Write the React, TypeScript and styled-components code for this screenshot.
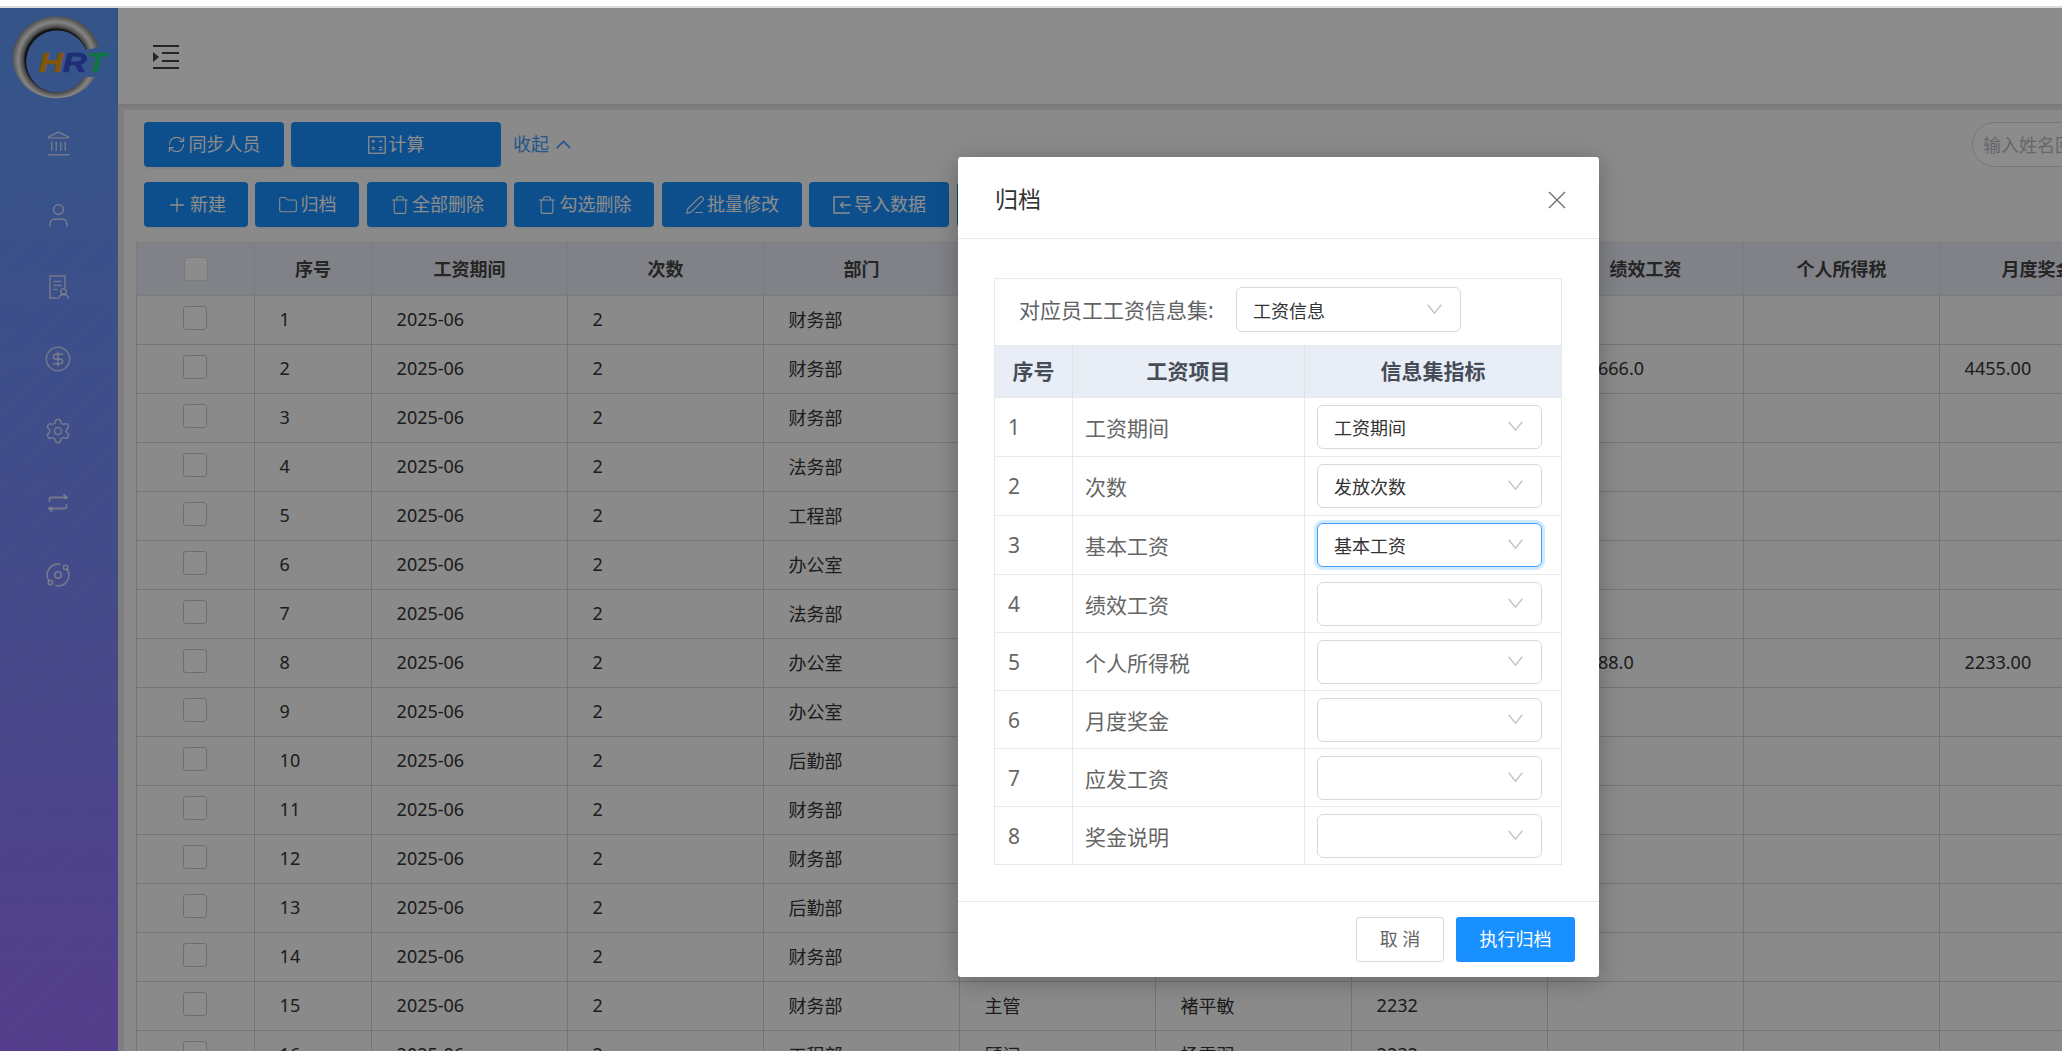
import React from 'react'
import styled, { createGlobalStyle } from 'styled-components';
import { ChevronUp, CircleDollarSign, Folder, Landmark, Orbit, PenLine, Plus, RefreshCw, Settings, Trash, User } from 'lucide-react';

const FONT = `"Noto Sans", "Noto Sans CJK SC", sans-serif`;

const GlobalStyle = createGlobalStyle`
    html, body {
        margin: 0;
        height: 100%;
        overflow: hidden;
        background: #fff;
    }
    body {
        font-family: ${FONT};
    }
    * {
        box-sizing: border-box;
    }
`;

interface Row {
    no: number,
    dept: string,
    post?: string,
    name?: string,
    base?: string,
    merit?: string,
    bonus?: string
}

const rows: Row[] = [
    { no: 1, dept: "财务部" },
    { no: 2, dept: "财务部", merit: "66,666.0", bonus: "4455.00" },
    { no: 3, dept: "财务部" },
    { no: 4, dept: "法务部" },
    { no: 5, dept: "工程部" },
    { no: 6, dept: "办公室" },
    { no: 7, dept: "法务部" },
    { no: 8, dept: "办公室", merit: "3,388.0", bonus: "2233.00" },
    { no: 9, dept: "办公室" },
    { no: 10, dept: "后勤部" },
    { no: 11, dept: "财务部" },
    { no: 12, dept: "财务部" },
    { no: 13, dept: "后勤部" },
    { no: 14, dept: "财务部" },
    { no: 15, dept: "财务部", post: "主管", name: "褚平敏", base: "2232" },
    { no: 16, dept: "工程部", post: "顾问", name: "杨雪羽", base: "2232" },
];

const columns = ["序号", "工资期间", "次数", "部门", "职务", "姓名", "基本工资", "绩效工资", "个人所得税", "月度奖金"];

const mapping = [
    { no: 1, item: "工资期间", value: "工资期间", tall: true },
    { no: 2, item: "次数", value: "发放次数", tall: true },
    { no: 3, item: "基本工资", value: "基本工资", tall: true, focused: true },
    { no: 4, item: "绩效工资", value: "" },
    { no: 5, item: "个人所得税", value: "" },
    { no: 6, item: "月度奖金", value: "" },
    { no: 7, item: "应发工资", value: "" },
    { no: 8, item: "奖金说明", value: "" },
];

function Logo() {
    return (
        <svg width="118" height="99" viewBox="0 0 118 99">
            <defs>
                <radialGradient id="ring" gradientUnits="userSpaceOnUse" cx="56" cy="52" r="44">
                    <stop offset="0.7" stopColor="#222" />
                    <stop offset="0.75" stopColor="#8a8a8a" />
                    <stop offset="0.86" stopColor="#f2f2f2" />
                    <stop offset="1" stopColor="#8f8f8f" />
                </radialGradient>
            </defs>
            <path d="M99 39 A44 41 0 1 0 95 69 L84 69 A31 31 0 1 1 86 42 Z" fill="url(#ring)" />
            <text transform="translate(39 64) scale(1.18 1)" fontFamily='"Liberation Sans", sans-serif' fontWeight="bold" fontStyle="italic" fontSize="28" strokeWidth="0.6">
                <tspan fill="#f0990f" stroke="#f0990f">H</tspan>
                <tspan fill="#3752d8" stroke="#3752d8">R</tspan>
                <tspan fill="#1cd27c" stroke="#1cd27c">T</tspan>
            </text>
        </svg>
    )
}

function DocIcon() {
    return (
        <svg width="24" height="26" viewBox="0 0 24 26" fill="none" stroke="currentColor" strokeWidth="1.5">
            <path d="M11 24H4V2h15v12" />
            <path d="M7.5 7.5h8M7.5 11.5h8M7.5 15.5h4" />
            <circle cx="17.5" cy="17.5" r="2.8" />
            <path d="M12.5 25c.5-3 2.5-4.500 5-4.500s4.500 1.500 5 4.500" />
        </svg>
    )
}

function SwapIcon() {
    return (
        <svg width="20" height="18" viewBox="0 0 20 18" fill="none" stroke="currentColor" strokeWidth="1.800">
            <path d="M1.500 8V5a1.500 1.500 0 0 1 1.500-1.500h16" />
            <path d="M15.500 .5 19 3.500l-3.500 1" />
            <path d="M18.500 10v3a1.500 1.500 0 0 1-1.500 1.500H1" />
            <path d="M4.500 17.500 1 14.500l3.500-1" />
        </svg>
    )
}

function FoldIcon() {
    return (
        <svg width="26" height="24" viewBox="0 0 26 24" fill="none">
            <path d="M0 1h26M9 8h17M9 16h17M0 23h26" stroke="#444" strokeWidth="2" />
            <path d="M0 7v10l6-5z" fill="#444" />
        </svg>
    )
}

function CalcIcon() {
    return (
        <svg width="18" height="18" viewBox="0 0 17 17" fill="none" stroke="currentColor" strokeWidth="1.200">
            <rect x=".7" y=".7" width="15.600" height="15.600" />
            <path d="M3.500 5h3M5 3.500v3M10.500 5h3M3.800 10.500l2.400 2.400M6.200 10.500l-2.400 2.400M10.500 10.800h3M10.500 12.800h3" />
        </svg>
    )
}

function ImportIcon() {
    return (
        <svg width="19" height="18" viewBox="0 0 18 17" fill="none" stroke="currentColor" strokeWidth="1.400">
            <path d="M16 1H1v15h15" />
            <path d="M17 8.500H7M10 5.500 7 8.500l3 3" />
        </svg>
    )
}

function Chevron() {
    return (
        <svg width="15" height="10" viewBox="0 0 15 10" fill="none" stroke="#c0c4cc" strokeWidth="1.400">
            <path d="M.7.7 7.500 9.200 14.300.7" />
        </svg>
    )
}

export default function App() {
    return (
        <>
            <GlobalStyle />
            <TopStrip />
            <Frame>
                <Sidebar>
                    <LogoBox><Logo /></LogoBox>
                    <MenuItem><Landmark size={27} strokeWidth={1.3} /></MenuItem>
                    <MenuItem><User size={29} strokeWidth={1.3} /></MenuItem>
                    <MenuItem><DocIcon /></MenuItem>
                    <MenuItem><CircleDollarSign size={28} strokeWidth={1.3} /></MenuItem>
                    <MenuItem><Settings size={28} strokeWidth={1.3} /></MenuItem>
                    <MenuItem><SwapIcon /></MenuItem>
                    <MenuItem><Orbit size={26} strokeWidth={1.5} /></MenuItem>
                </Sidebar>
                <Main>
                    <TopBar><FoldIcon /></TopBar>
                    <Content>
                        <Card>
                            <ToolRow $spread>
                                <ButtonGroup>
                                    <ActionButton $width={140}><RefreshCw size={19} strokeWidth={1.4} /><ButtonText>同步人员</ButtonText></ActionButton>
                                    <ActionButton $width={210}><CalcIcon /><ButtonText>计算</ButtonText></ActionButton>
                                    <CollapseLink><ButtonText>收起</ButtonText><ChevronUp size={25} strokeWidth={1.5} /></CollapseLink>
                                </ButtonGroup>
                                <SearchBox>输入姓名回车查询</SearchBox>
                            </ToolRow>
                            <ToolRow>
                                <ButtonGroup>
                                    <ActionButton $width={104}><Plus size={22} strokeWidth={1.5} /><ButtonText>新建</ButtonText></ActionButton>
                                    <ActionButton $width={104}><Folder size={20} strokeWidth={1.3} /><ButtonText>归档</ButtonText></ActionButton>
                                    <ActionButton $width={140}><Trash size={20} strokeWidth={1.3} /><ButtonText>全部删除</ButtonText></ActionButton>
                                    <ActionButton $width={140}><Trash size={20} strokeWidth={1.3} /><ButtonText>勾选删除</ButtonText></ActionButton>
                                    <ActionButton $width={140}><PenLine size={20} strokeWidth={1.3} /><ButtonText>批量修改</ButtonText></ActionButton>
                                    <ActionButton $width={140}><ImportIcon /><ButtonText>导入数据</ButtonText></ActionButton>
                                    <ActionButton $width={140}><ImportIcon /><ButtonText>导出数据</ButtonText></ActionButton>
                                </ButtonGroup>
                            </ToolRow>
                            <DataTable>
                                <colgroup>
                                    <col width={118} />
                                    <col width={117} />
                                    {columns.slice(1).map(c => <col key={c} width={196} />)}
                                </colgroup>
                                <thead>
                                    <tr>
                                        <HeadCell><CheckBox $head /></HeadCell>
                                        {columns.map(c => <HeadCell key={c}>{c}</HeadCell>)}
                                    </tr>
                                </thead>
                                <tbody>
                                    {rows.map(r => (
                                        <tr key={r.no}>
                                            <BodyCell $check><CheckBox /></BodyCell>
                                            <BodyCell>{r.no}</BodyCell>
                                            <BodyCell>2025-06</BodyCell>
                                            <BodyCell>2</BodyCell>
                                            <BodyCell>{r.dept}</BodyCell>
                                            <BodyCell>{r.post}</BodyCell>
                                            <BodyCell>{r.name}</BodyCell>
                                            <BodyCell>{r.base}</BodyCell>
                                            <BodyCell>{r.merit}</BodyCell>
                                            <BodyCell />
                                            <BodyCell>{r.bonus}</BodyCell>
                                        </tr>
                                    ))}
                                </tbody>
                            </DataTable>
                        </Card>
                    </Content>
                </Main>
                <Overlay>
                    <Modal>
                        <ModalHead>
                            <ModalTitle>归档</ModalTitle>
                            <CloseMark width="18" height="18" viewBox="0 0 18 18" stroke="#777" strokeWidth="1.500">
                                <path d="M1 1l16 16M17 1 1 17" />
                            </CloseMark>
                        </ModalHead>
                        <ModalBody>
                            <MapBox>
                                <SetRow>
                                    <SetLabel>对应员工工资信息集:</SetLabel>
                                    <SelectBox $wide><span>工资信息</span><Chevron /></SelectBox>
                                </SetRow>
                                <MapHead>
                                    <span>序号</span>
                                    <span>工资项目</span>
                                    <span>信息集指标</span>
                                </MapHead>
                                {mapping.map(m => (
                                    <MapRow key={m.no} $tall={m.tall}>
                                        <MapCell>{m.no}</MapCell>
                                        <MapCell>{m.item}</MapCell>
                                        <MapSelectCell>
                                            <SelectBox $focused={m.focused}><span>{m.value}</span><Chevron /></SelectBox>
                                        </MapSelectCell>
                                    </MapRow>
                                ))}
                            </MapBox>
                        </ModalBody>
                        <ModalFoot>
                            <CancelButton>取 消</CancelButton>
                            <OkButton>执行归档</OkButton>
                        </ModalFoot>
                    </Modal>
                </Overlay>
            </Frame>
        </>
    )
}

const TopStrip = styled.div`
    height: 8px;
    background: #fff;
    border-bottom: 2px solid #dedede;
`;

const Frame = styled.div`
    position: relative;
    display: flex;
    height: 1043px;
    overflow: hidden;
`;

const Sidebar = styled.aside`
    flex: 0 0 118px;
    display: flex;
    flex-direction: column;
    align-items: center;
    color: rgba(255, 255, 255, 0.68);
    background:
        repeating-linear-gradient(135deg, rgba(255, 255, 255, 0.02) 0 2px, transparent 2px 26px),
        linear-gradient(180deg, #5f9bfb 0%, #7c88fb 55%, #9b72ff 100%);
`;

const LogoBox = styled.div`
    height: 99px;
    align-self: stretch;
`;

const MenuItem = styled.div`
    height: 72px;
    display: flex;
    align-items: center;
    justify-content: center;
    padding-right: 2px;
`;

const Main = styled.div`
    flex: 1;
    min-width: 0;
    display: flex;
    flex-direction: column;
    background: #e7e8ec;
`;

const TopBar = styled.header`
    flex: 0 0 96px;
    display: flex;
    align-items: center;
    padding: 2px 0 0 35px;
    background: #fff;
    box-shadow: 0 1px 4px rgba(0, 0, 0, 0.08);
`;

const Content = styled.div`
    flex: 1;
    min-height: 0;
    padding: 6px 0 0 6px;
`;

const Card = styled.div`
    height: 100%;
    width: 2200px;
    padding: 12px 0 0 11.6px;
    background: #fbfbfb;
    overflow: hidden;
`;

const ToolRow = styled.div<{ $spread?: boolean }>`
    display: flex;
    align-items: center;
    justify-content: ${p => p.$spread ? "space-between" : "flex-start"};
    width: 2088px;
    height: 45px;
    margin: 0 0 15px 8.4px;
`;

const ButtonGroup = styled.div`
    display: flex;
    align-items: center;
    gap: 7.5px;
`;

const ActionButton = styled.button<{ $width: number }>`
    display: flex;
    align-items: center;
    justify-content: center;
    gap: 2px;
    width: ${p => p.$width}px;
    height: 45px;
    padding: 0;
    color: #fff;
    background: #1890ff;
    border: none;
    border-radius: 4px;
    box-shadow: 0 2px 0 rgba(0, 0, 0, 0.04);
    font-family: ${FONT};
    font-size: 18px;
`;

const ButtonText = styled.span`
    margin-top: -3px;
`;

const CollapseLink = styled.a`
    display: flex;
    align-items: center;
    gap: 2px;
    margin-left: 4px;
    color: #409eff;
    font-size: 18px;
`;

const SearchBox = styled.div`
    width: 260px;
    height: 45px;
    padding-left: 10px;
    line-height: 45px;
    color: #b8bcc4;
    background: #fff;
    border: 1px solid #d9d9d9;
    border-radius: 23px;
    font-size: 18px;
`;

const DataTable = styled.table`
    table-layout: fixed;
    width: 2000px;
    border-collapse: collapse;
    font-size: 18px;
    color: #333;
`;

const HeadCell = styled.th`
    height: 53px;
    padding: 0 0 3px 1px;
    color: #444;
    background: #e9edf6;
    border: 1px solid #dfe2ea;
    font-weight: bold;
    text-align: center;
    vertical-align: middle;

    & > div {
        margin: 3px auto 0;
    }
`;

const BodyCell = styled.td<{ $check?: boolean }>`
    height: 49px;
    padding: 0 0 ${p => p.$check ? 4 : 2}px ${p => p.$check ? 0 : 25}px;
    border: 1px solid #d6d6d6;
    text-align: left;
    vertical-align: middle;

    & > div {
        margin: 0 auto;
    }
`;

const CheckBox = styled.div<{ $head?: boolean }>`
    width: 24px;
    height: 24px;
    background: #fff;
    border: 1px solid ${p => p.$head ? "#dcdfe6" : "#c9c9c9"};
    border-radius: 3px;
`;

const Overlay = styled.div`
    position: absolute;
    inset: 0;
    padding: 149px 0 0 958px;
    background: rgba(0, 0, 0, 0.45);
`;

const Modal = styled.div`
    width: 641px;
    height: 820px;
    display: flex;
    flex-direction: column;
    background: #fff;
    border-radius: 3px;
    box-shadow: 0 4px 24px rgba(0, 0, 0, 0.25);
`;

const ModalHead = styled.div`
    flex: 0 0 82px;
    display: flex;
    align-items: center;
    justify-content: space-between;
    padding: 0 33px 0 37px;
    border-bottom: 1px solid #e8e8e8;
`;

const ModalTitle = styled.div`
    font-size: 23px;
    color: #333;
`;

const CloseMark = styled.svg`
    margin-top: 4px;
`;

const ModalBody = styled.div`
    flex: 1;
    padding: 39px 37px 0 36px;
`;

const MapBox = styled.div`
    border: 1px solid #e8e8e8;
    border-bottom: none;
`;

const SetRow = styled.div`
    display: flex;
    align-items: center;
    gap: 19px;
    height: 66px;
    padding: 0 0 5px 24px;
`;

const SetLabel = styled.div`
    width: 198px;
    margin-top: -1px;
    color: #606266;
    font-size: 21px;
    white-space: nowrap;
`;

const SelectBox = styled.div<{ $wide?: boolean, $focused?: boolean }>`
    display: flex;
    align-items: center;
    justify-content: space-between;
    width: 225px;
    height: ${p => p.$wide ? 45 : 44}px;
    padding: 0 18px 0 16px;
    color: #333;
    background: #fff;
    border: 1.300px solid ${p => p.$focused ? "#40a0ff" : "#d9d9d9"};
    border-radius: 6px;
    box-shadow: ${p => p.$focused ? "0 0 0 3px rgba(24, 144, 255, 0.2)" : "none"};
    font-size: 18px;

    svg {
        margin-top: -2px;
    }
`;

const MapHead = styled.div`
    display: grid;
    grid-template-columns: 77px 232px 1fr;
    height: 53px;
    color: #444c58;
    background: #e9edf6;
    border-top: 1px solid #e8e8e8;
    border-bottom: 1px solid #e8e8e8;
    font-size: 21px;
    font-weight: bold;
    text-align: center;
    line-height: 51px;

    span + span {
        border-left: 1px solid #e0e3ea;
    }
`;

const MapRow = styled.div<{ $tall?: boolean }>`
    display: grid;
    grid-template-columns: 77px 232px 1fr;
    height: ${p => p.$tall ? 59 : 58}px;
    border-bottom: 1px solid #e8e8e8;
`;

const MapCell = styled.div`
    display: flex;
    align-items: center;
    padding: 0 0 0 13px;
    color: #666;
    font-size: 21px;

    & + & {
        padding-left: 12px;
        border-left: 1px solid #e8e8e8;
    }
`;

const MapSelectCell = styled.div`
    display: flex;
    align-items: center;
    padding-left: 12px;
    border-left: 1px solid #e8e8e8;
`;

const ModalFoot = styled.div`
    flex: 0 0 76px;
    display: flex;
    justify-content: flex-end;
    gap: 12px;
    padding: 15px 24px 0 0;
    border-top: 1px solid #e8e8e8;
`;

const CancelButton = styled.button`
    width: 88px;
    height: 45px;
    padding: 0 0 3px;
    color: #666;
    background: #fff;
    border: 1px solid #d9d9d9;
    border-radius: 3px;
    font-family: ${FONT};
    font-size: 18px;
`;

const OkButton = styled.button`
    width: 119px;
    height: 45px;
    padding: 0 0 3px;
    color: #fff;
    background: #1890ff;
    border: none;
    border-radius: 3px;
    font-family: ${FONT};
    font-size: 18px;
`;
